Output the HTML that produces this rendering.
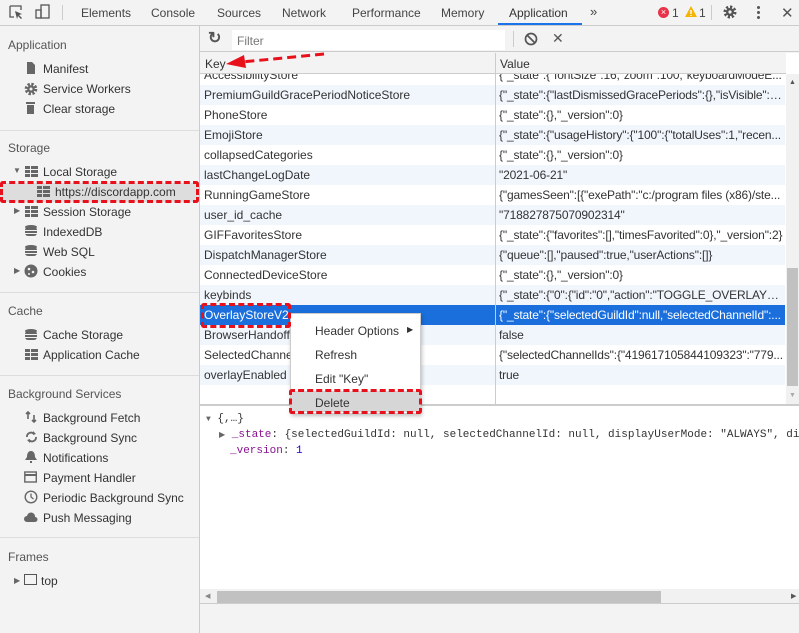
<!DOCTYPE html><html><head><style>
*{margin:0;padding:0;box-sizing:border-box}
body{width:799px;height:633px;position:relative;overflow:hidden;background:#f3f3f3;font-family:"Liberation Sans",sans-serif;font-size:12px;color:#333}
.a{position:absolute;white-space:nowrap}
.tab{position:absolute;top:6px;color:#444;font-size:12px}
.sec{position:absolute;left:8px;color:#555;font-size:12px}
.it{position:absolute;left:43px;color:#333;font-size:12px}
.ic{position:absolute;left:24px;width:13px;height:12px}
.row{position:absolute;left:201px;width:585px;height:20px;line-height:20px}
.row span{position:absolute;left:4px}
.row b{font-weight:normal;position:absolute;left:299px;width:286px;overflow:hidden;text-overflow:ellipsis;letter-spacing:-0.15px}
.t{background:#f1f6fd}
.dash{position:absolute;border:3px dashed #e8101a;border-radius:3px}
</style></head><body>
<div class="a" style="left:0;top:0;width:799px;height:26px;background:#f3f3f3;border-bottom:1px solid #ccc"></div>
<svg class="a" style="left:9px;top:5px" width="14" height="15"><path d="M1 1h11v4M1 1v11h4" fill="none" stroke="#555" stroke-width="1.3"/><path d="M6 6l7 3-3 1 3 3-1 1-3-3-1 3z" fill="#555"/></svg>
<svg class="a" style="left:35px;top:4px" width="16" height="16"><rect x="6" y="1" width="8" height="13" fill="none" stroke="#555" stroke-width="1.3"/><rect x="1" y="6" width="5" height="8" fill="none" stroke="#555" stroke-width="1.3"/></svg>
<div class="a" style="left:62px;top:5px;width:1px;height:15px;background:#ccc"></div>
<div class="tab" style="left:81px">Elements</div>
<div class="tab" style="left:151px">Console</div>
<div class="tab" style="left:217px">Sources</div>
<div class="tab" style="left:282px">Network</div>
<div class="tab" style="left:352px">Performance</div>
<div class="tab" style="left:441px">Memory</div>
<div class="tab" style="left:509px;color:#333">Application</div>
<div class="a" style="left:498px;top:23px;width:84px;height:2px;background:#1a73e8"></div>
<div class="tab" style="left:590px;top:4px;font-size:13px">»</div>
<div class="a" style="left:658px;top:7px;width:11px;height:11px;border-radius:50%;background:#e8334a;color:#fff;font-size:9px;line-height:11px;text-align:center">×</div>
<div class="tab" style="left:672px">1</div>
<svg class="a" style="left:685px;top:6px" width="12" height="12"><path d="M6 0L12 11H0z" fill="#f5b400"/><path d="M6 4v4M6 9v1" stroke="#fff" stroke-width="1.4"/></svg>
<div class="tab" style="left:699px">1</div>
<div class="a" style="left:711px;top:5px;width:1px;height:15px;background:#ccc"></div>
<svg class="a" style="left:723px;top:5px" width="14" height="14"><circle cx="7" cy="7" r="5" fill="none" stroke="#555" stroke-width="3" stroke-dasharray="2.2 1.7"/><circle cx="7" cy="7" r="4" fill="#555"/><circle cx="7" cy="7" r="1.6" fill="#f3f3f3"/></svg>
<div class="a" style="left:757px;top:6px;width:3px;height:3px;background:#555;border-radius:50%;box-shadow:0 5px 0 #555,0 10px 0 #555"></div>
<div class="tab" style="left:781px;top:4px;font-size:15px;color:#555">✕</div>

<div class="a" style="left:199px;top:26px;width:1px;height:607px;background:#ccc"></div>
<div class="sec" style="top:38px">Application</div>
<svg class="ic" style="top:62px" viewBox="0 0 13 12"><path d="M3 0h5l3 3v9H3z" fill="#666"/></svg><div class="it" style="top:62px">Manifest</div>
<svg class="ic" style="top:82px;left:24px;width:14px;height:14px" viewBox="0 0 14 14"><circle cx="7" cy="7" r="4.8" fill="none" stroke="#666" stroke-width="3" stroke-dasharray="2.3 1.5"/><circle cx="7" cy="7" r="3.8" fill="#666"/><circle cx="7" cy="7" r="1.5" fill="#f3f3f3"/></svg><div class="it" style="top:82px">Service Workers</div>
<svg class="ic" style="top:102px" viewBox="0 0 13 12"><rect x="2" y="0" width="9" height="2" fill="#666"/><rect x="3" y="3" width="7" height="9" fill="#666"/></svg><div class="it" style="top:102px">Clear storage</div>
<div class="a" style="left:0;top:130px;width:199px;height:1px;background:#ddd"></div>
<div class="sec" style="top:141px">Storage</div>
<div class="a" style="left:13px;top:166px;font-size:8px;color:#666">▼</div>
<svg class="ic" style="top:166px;left:25px" viewBox="0 0 13 12"><path d="M0 0h5v3H0zM6 0h7v3H6zM0 4h5v3H0zM6 4h7v3H6zM0 8h5v3H0zM6 8h7v3H6z" fill="#666"/></svg><div class="it" style="top:165px">Local Storage</div>
<div class="a" style="left:0;top:183px;width:199px;height:19px;background:#ddd"></div>
<svg class="ic" style="top:186px;left:37px" viewBox="0 0 13 12"><path d="M0 0h5v3H0zM6 0h7v3H6zM0 4h5v3H0zM6 4h7v3H6zM0 8h5v3H0zM6 8h7v3H6z" fill="#666"/></svg><div class="it" style="top:185px;left:55px">https://discordapp.com</div>
<div class="a" style="left:14px;top:206px;font-size:8px;color:#666">▶</div>
<svg class="ic" style="top:206px;left:25px" viewBox="0 0 13 12"><path d="M0 0h5v3H0zM6 0h7v3H6zM0 4h5v3H0zM6 4h7v3H6zM0 8h5v3H0zM6 8h7v3H6z" fill="#666"/></svg><div class="it" style="top:205px">Session Storage</div>
<svg class="ic" style="top:225px;left:25px" viewBox="0 0 13 12"><ellipse cx="6" cy="2" rx="6" ry="2" fill="#666"/><rect x="0" y="2" width="12" height="9" rx="3" fill="#666"/><path d="M0 5.5h12M0 8.5h12" stroke="#f3f3f3"/></svg><div class="it" style="top:225px">IndexedDB</div>
<svg class="ic" style="top:245px;left:25px" viewBox="0 0 13 12"><ellipse cx="6" cy="2" rx="6" ry="2" fill="#666"/><rect x="0" y="2" width="12" height="9" rx="3" fill="#666"/><path d="M0 5.5h12M0 8.5h12" stroke="#f3f3f3"/></svg><div class="it" style="top:245px">Web SQL</div>
<div class="a" style="left:14px;top:266px;font-size:8px;color:#666">▶</div>
<svg class="ic" style="top:264px;left:24px;width:14px;height:14px" viewBox="0 0 14 14"><circle cx="7" cy="7" r="6.5" fill="#666"/><circle cx="5" cy="5" r="1.3" fill="#f3f3f3"/><circle cx="9" cy="8" r="1.3" fill="#f3f3f3"/><circle cx="5" cy="10" r="1" fill="#f3f3f3"/></svg><div class="it" style="top:265px">Cookies</div>
<div class="a" style="left:0;top:292px;width:199px;height:1px;background:#ddd"></div>
<div class="sec" style="top:304px">Cache</div>
<svg class="ic" style="top:329px;left:25px" viewBox="0 0 13 12"><ellipse cx="6" cy="2" rx="6" ry="2" fill="#666"/><rect x="0" y="2" width="12" height="9" rx="3" fill="#666"/><path d="M0 5.5h12M0 8.5h12" stroke="#f3f3f3"/></svg><div class="it" style="top:328px">Cache Storage</div>
<svg class="ic" style="top:349px;left:25px" viewBox="0 0 13 12"><path d="M0 0h5v3H0zM6 0h7v3H6zM0 4h5v3H0zM6 4h7v3H6zM0 8h5v3H0zM6 8h7v3H6z" fill="#666"/></svg><div class="it" style="top:348px">Application Cache</div>
<div class="a" style="left:0;top:375px;width:199px;height:1px;background:#ddd"></div>
<div class="sec" style="top:387px">Background Services</div>
<svg class="ic" style="top:411px;left:25px" viewBox="0 0 13 12"><path d="M3 1v7M1 3l2-2 2 2M9 4v7M7 9l2 2 2-2" fill="none" stroke="#666" stroke-width="1.6"/></svg><div class="it" style="top:411px">Background Fetch</div>
<svg class="ic" style="top:431px;left:25px" viewBox="0 0 13 12"><path d="M2 6a4 4 0 017-3M11 6a4 4 0 01-7 3" fill="none" stroke="#666" stroke-width="1.8"/><path d="M8 0l3 3-3 1zM5 12L2 9l3-1z" fill="#666"/></svg><div class="it" style="top:431px">Background Sync</div>
<svg class="ic" style="top:451px;left:25px" viewBox="0 0 13 12"><path d="M6 0c3 0 4 3 4 6l2 3H0l2-3c0-3 1-6 4-6zM5 10h2v2H5z" fill="#666"/></svg><div class="it" style="top:451px">Notifications</div>
<svg class="ic" style="top:471px;left:24px" viewBox="0 0 13 12"><rect x="0.8" y="1" width="11.5" height="10" fill="none" stroke="#666" stroke-width="1.4"/><rect x="1" y="3" width="11" height="2" fill="#666"/></svg><div class="it" style="top:471px">Payment Handler</div>
<svg class="ic" style="top:490px;left:24px;width:14px;height:14px" viewBox="0 0 14 14"><circle cx="7" cy="7" r="5.8" fill="none" stroke="#666" stroke-width="1.4"/><path d="M7 3.5V7l2.5 2" fill="none" stroke="#666" stroke-width="1.3"/></svg><div class="it" style="top:491px">Periodic Background Sync</div>
<svg class="ic" style="top:512px;left:24px;width:14px" viewBox="0 0 14 12"><path d="M3 10a3 3 0 010-6 4 4 0 018 1 2.5 2.5 0 010 5z" fill="#666"/></svg><div class="it" style="top:511px">Push Messaging</div>
<div class="a" style="left:0;top:537px;width:199px;height:1px;background:#ddd"></div>
<div class="sec" style="top:550px">Frames</div>
<div class="a" style="left:14px;top:576px;font-size:8px;color:#666">▶</div>
<div class="a" style="left:24px;top:574px;width:13px;height:11px;border:1.5px solid #555"></div>
<div class="it" style="top:574px;left:41px">top</div>

<div class="a" style="left:200px;top:26px;width:599px;height:26px;background:#f3f3f3;border-bottom:1px solid #ccc"></div>
<div class="a" style="left:208px;top:28px;font-size:16px;color:#555;font-weight:bold">↻</div>
<div class="a" style="left:232px;top:30px;width:273px;height:20px;background:#fff"></div>
<div class="a" style="left:237px;top:34px;color:#777">Filter</div>
<div class="a" style="left:513px;top:31px;width:1px;height:16px;background:#ccc"></div>
<svg class="a" style="left:524px;top:32px" width="14" height="14"><circle cx="7" cy="7" r="5.5" fill="none" stroke="#555" stroke-width="1.7"/><path d="M3 3l8 8" stroke="#555" stroke-width="1.7"/></svg>
<div class="a" style="left:552px;top:30px;font-size:14px;color:#555">✕</div>

<div class="a" style="left:200px;top:53px;width:599px;height:352px;background:#fff"></div>
<div class="a" style="left:200px;top:53px;width:586px;height:21px;background:#f3f3f3;border-bottom:1px solid #ccc"></div>
<div class="a" style="left:205px;top:57px">Key</div>
<div class="a" style="left:500px;top:57px">Value</div>
<div class="a" style="left:200px;top:74px;width:586px;height:330px;overflow:hidden">
<div class="row" style="left:0;top:-9px"><span>AccessibilityStore</span><b>{"_state":{"fontSize":16,"zoom":100,"keyboardModeE...</b></div>
<div class="row t" style="left:0;top:11px"><span>PremiumGuildGracePeriodNoticeStore</span><b>{"_state":{"lastDismissedGracePeriods":{},"isVisible":{}...</b></div>
<div class="row" style="left:0;top:31px"><span>PhoneStore</span><b>{"_state":{},"_version":0}</b></div>
<div class="row t" style="left:0;top:51px"><span>EmojiStore</span><b>{"_state":{"usageHistory":{"100":{"totalUses":1,"recen...</b></div>
<div class="row" style="left:0;top:71px"><span>collapsedCategories</span><b>{"_state":{},"_version":0}</b></div>
<div class="row t" style="left:0;top:91px"><span>lastChangeLogDate</span><b>"2021-06-21"</b></div>
<div class="row" style="left:0;top:111px"><span>RunningGameStore</span><b>{"gamesSeen":[{"exePath":"c:/program files (x86)/ste...</b></div>
<div class="row t" style="left:0;top:131px"><span>user_id_cache</span><b>"718827875070902314"</b></div>
<div class="row" style="left:0;top:151px"><span>GIFFavoritesStore</span><b>{"_state":{"favorites":[],"timesFavorited":0},"_version":2}</b></div>
<div class="row t" style="left:0;top:171px"><span>DispatchManagerStore</span><b>{"queue":[],"paused":true,"userActions":[]}</b></div>
<div class="row" style="left:0;top:191px"><span>ConnectedDeviceStore</span><b>{"_state":{},"_version":0}</b></div>
<div class="row t" style="left:0;top:211px"><span>keybinds</span><b>{"_state":{"0":{"id":"0","action":"TOGGLE_OVERLAY_IN...</b></div>
<div class="row" style="left:0;top:231px;background:#1a6fdc;color:#fff"><span>OverlayStoreV2</span><b>{"_state":{"selectedGuildId":null,"selectedChannelId":...</b></div>
<div class="row t" style="left:0;top:251px"><span>BrowserHandoffStore</span><b>false</b></div>
<div class="row" style="left:0;top:271px"><span>SelectedChannelStore</span><b>{"selectedChannelIds":{"419617105844109323":"779...</b></div>
<div class="row t" style="left:0;top:291px"><span>overlayEnabled</span><b>true</b></div>
</div>
<div class="a" style="left:495px;top:53px;width:1px;height:352px;background:#ccc"></div>
<div class="a" style="left:786px;top:74px;width:13px;height:330px;background:#f1f1f1"></div>
<div class="a" style="left:787px;top:268px;width:11px;height:118px;background:#c1c1c1"></div>
<div class="a" style="left:789px;top:79px;font-size:7px;color:#555">▲</div>
<div class="a" style="left:789px;top:392px;font-size:7px;color:#aaa">▼</div>
<div class="a" style="left:200px;top:404px;width:599px;height:2px;background:#ccc"></div>

<div class="a" style="left:200px;top:406px;width:599px;height:184px;background:#fff"></div>
<div class="a" style="font-family:'Liberation Mono',monospace;font-size:11px;left:206px;top:413px"><span style="font-size:8px;color:#666">▼</span> {,…}</div>
<div class="a" style="font-family:'Liberation Mono',monospace;font-size:11px;left:219px;top:429px"><span style="font-size:8px;color:#666">▶</span> <span style="color:#881391">_state</span>: {selectedGuildId: null, selectedChannelId: null, displayUserMode: "ALWAYS", dis</div>
<div class="a" style="font-family:'Liberation Mono',monospace;font-size:11px;left:230px;top:445px"><span style="color:#881391">_version</span>: <span style="color:#1c00cf">1</span></div>
<div class="a" style="left:200px;top:589px;width:599px;height:15px;background:#f1f1f1;border-bottom:1px solid #ccc"></div>
<div class="a" style="left:217px;top:591px;width:444px;height:12px;background:#c1c1c1"></div>
<div class="a" style="left:205px;top:592px;font-size:7px;color:#888">◀</div>
<div class="a" style="left:791px;top:592px;font-size:7px;color:#555">▶</div>

<div class="a" style="left:290px;top:313px;width:131px;height:101px;background:#fff;border:1px solid #ccc;box-shadow:1px 2px 4px rgba(0,0,0,.25)"></div>
<div class="a" style="left:315px;top:324px">Header Options</div>
<div class="a" style="left:407px;top:325px;font-size:8px">▶</div>
<div class="a" style="left:315px;top:348px">Refresh</div>
<div class="a" style="left:315px;top:372px">Edit "Key"</div>
<div class="a" style="left:291px;top:391px;width:129px;height:21px;background:#d6d6d6"></div>
<div class="a" style="left:315px;top:396px">Delete</div>

<div class="dash" style="left:0;top:181px;width:199px;height:22px"></div>
<div class="dash" style="left:201px;top:303px;width:90px;height:25px"></div>
<div class="dash" style="left:289px;top:389px;width:133px;height:25px"></div>
<svg class="a" style="left:224px;top:52px" width="105" height="16"><path d="M100 2L18 10" stroke="#e8101a" stroke-width="3" stroke-dasharray="9 5"/><path d="M2 12L20 3l2 13z" fill="#e8101a"/></svg>
</body></html>
